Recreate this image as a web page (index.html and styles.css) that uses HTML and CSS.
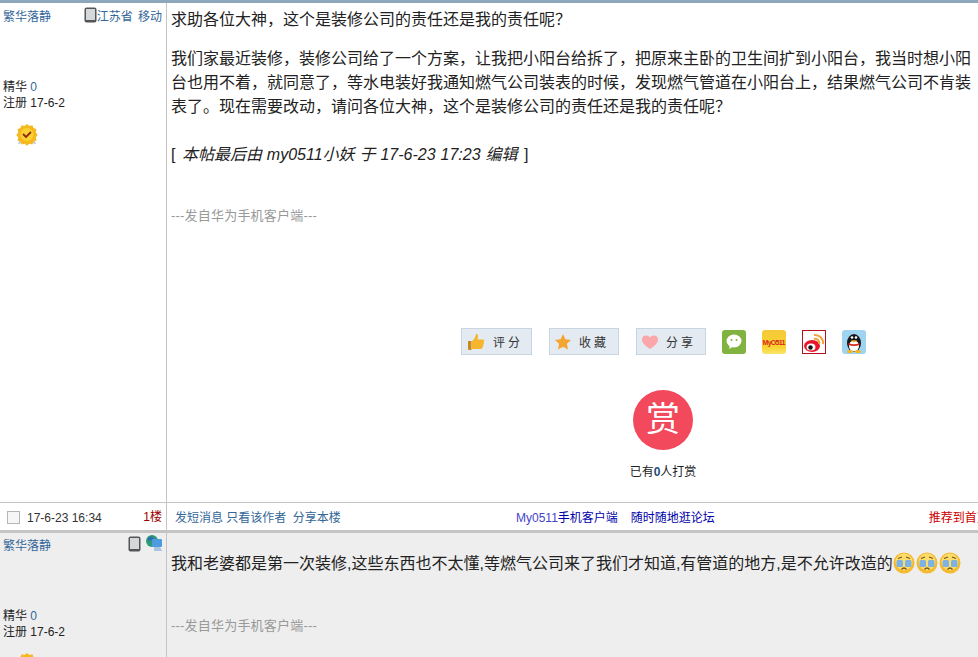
FILE: index.html
```html
<!DOCTYPE html>
<html lang="zh-CN">
<head>
    <meta charset="UTF-8">
    <title>求助各位大神，这个是装修公司的责任还是我的责任呢？</title>
    <link rel="stylesheet" href="styles.css">
</head>
<body>
    <div class="topstrip"></div>

    <!-- 1楼 -->
    <div class="post first">
        <div class="side">
            <div class="side-head">
                <a class="author">繁华落静</a>
                <span class="from">
                    <svg class="tablet" width="13" height="16" viewBox="0 0 13 16"><rect x="0.5" y="0.5" width="12" height="15" rx="2" fill="#555"/><rect x="2" y="2" width="9" height="11" fill="#d4d8da"/></svg>
                    <span class="place">江苏省 移动</span>
                </span>
            </div>
            <div class="stats">
                <div>精华 <a>0</a></div>
                <div>注册 <span class="num">17-6-2</span></div>
            </div>
            <svg class="medal" width="22" height="22" viewBox="0 0 22 22">
                <path d="M3 17l-1 3 4-1zM19 17l1 3-4-1z" fill="#b9c6d2"/>
                <path d="M11 0l2.400 2 3-.8 1.200 2.900 2.900 1.200-.8 3 2 2.700-2 2.400.8 3-2.900 1.200-1.200 2.900-3-.8-2.400 2-2.400-2-3 .8-1.200-2.900-2.900-1.200.8-3-2-2.400 2-2.700-.8-3 2.900-1.200 1.200-2.900 3 .8z" fill="#f5b81f"/>
                <circle cx="11" cy="10.500" r="6.500" fill="#fbd232"/>
                <path d="M7 10l3 3 5-5" fill="none" stroke="#8c2a12" stroke-width="1.800"/>
            </svg>
        </div>
        <div class="main">
            <h1 class="title">求助各位大神，这个是装修公司的责任还是我的责任呢？</h1>
            <p class="text">我们家最近装修，装修公司给了一个方案，让我把小阳台给拆了，把原来主卧的卫生间扩到小阳台，我当时想小阳台也用不着，就同意了，等水电装好我通知燃气公司装表的时候，发现燃气管道在小阳台上，结果燃气公司不肯装表了。现在需要改动，请问各位大神，这个是装修公司的责任还是我的责任呢？</p>
            <p class="edited">[ <i>本帖最后由 my0511小妖 于 17-6-23 17:23 编辑</i> ]</p>
            <p class="sig">---发自华为手机客户端---</p>

            <div class="actions">
                <a class="btn">
                    <svg width="20" height="20" viewBox="0 0 20 20"><path d="M2 9h3.500v9H3a1 1 0 0 1-1-1z" fill="#c98a1a"/><path d="M6 9c2-1 3.500-4 4-7 2-.5 2.500 2 1.500 5.500H17c1.500 0 1.500 2 .5 2.500.8 1 .5 2.200-.5 2.700.5 1 .2 2-.6 2.400.2 1.200-.5 1.900-1.400 1.900H8.500L6 17z" fill="#f7b52c"/></svg>
                    <span>评分</span>
                </a>
                <a class="btn">
                    <svg width="18" height="18" viewBox="0 0 18 18"><path d="M9 1l2.400 5.200 5.600.7-4.100 3.900 1.100 5.700-5-2.800-5 2.800 1.100-5.700L1 6.900l5.600-.7z" fill="#f3a52f"/></svg>
                    <span>收藏</span>
                </a>
                <a class="btn">
                    <svg width="18" height="16" viewBox="0 0 18 16"><path d="M9 15C4 11.500 1 9 1 5.500 1 3 3 1.500 5 1.500c1.800 0 3.200.9 4 2.300.8-1.400 2.200-2.300 4-2.300 2 0 4 1.500 4 4C17 9 14 11.500 9 15z" fill="#fba6a8"/></svg>
                    <span>分享</span>
                </a>
                <div class="shares">
                    <svg width="24" height="24" viewBox="0 0 24 24"><rect width="24" height="24" rx="3" fill="#80b340"/><ellipse cx="12" cy="11" rx="7.500" ry="6.500" fill="#fff"/><path d="M8 15l-1 4 5-3z" fill="#fff"/><circle cx="9.500" cy="10" r="1" fill="#80b340"/><circle cx="14.500" cy="10" r="1" fill="#80b340"/></svg>
                    <svg width="24" height="24" viewBox="0 0 24 24"><defs><linearGradient id="mygrad" x1="0" y1="0" x2="0" y2="1"><stop offset="0" stop-color="#f6c83a"/><stop offset="0.7" stop-color="#f8d32e"/><stop offset="1" stop-color="#fbe46c"/></linearGradient></defs><rect width="24" height="24" rx="3" fill="url(#mygrad)"/><text x="12" y="15" class="mylogo" text-anchor="middle" textLength="23">MyO511</text></svg>
                    <svg width="24" height="24" viewBox="0 0 24 24"><rect x="0.500" y="0.500" width="23" height="23" fill="#fff" stroke="#b5121b"/><ellipse cx="10" cy="16" rx="8" ry="6" fill="#e6162d"/><ellipse cx="9" cy="17" rx="4.500" ry="3.500" fill="#fff"/><circle cx="8.500" cy="17.500" r="2.200" fill="#111"/><path d="M12 5a8 8 0 0 1 9 9M12 9a4 4 0 0 1 5 5" fill="none" stroke="#f2a33a" stroke-width="2"/></svg>
                    <svg width="24" height="24" viewBox="0 0 24 24"><rect width="24" height="24" rx="3" fill="#9fd3f2"/><ellipse cx="12" cy="13" rx="7" ry="9" fill="#151515"/><ellipse cx="12" cy="16" rx="5" ry="5.500" fill="#fff"/><circle cx="10" cy="7.500" r="1.300" fill="#fff"/><circle cx="14" cy="7.500" r="1.300" fill="#fff"/><path d="M8.500 10.500h7l-3.500 2z" fill="#f5b51f"/><path d="M6.500 13q5.500 2.500 11 0v2q-5.500 2-11 0z" fill="#d8281e"/><ellipse cx="8" cy="21.500" rx="3" ry="1.500" fill="#f5b51f"/><ellipse cx="16" cy="21.500" rx="3" ry="1.500" fill="#f5b51f"/></svg>
                </div>
            </div>

            <div class="reward">
                <div class="reward-btn">赏</div>
                <div class="reward-text">已有<b>0</b>人打赏</div>
            </div>
        </div>
    </div>

    <div class="postfoot">
        <div class="foot-side">
            <span class="check"></span>
            <span class="time">17-6-23 16:34</span>
            <span class="floor">1楼</span>
        </div>
        <div class="foot-main">
            <span class="links"><a>发短消息</a> <a>只看该作者</a> <a class="gap">分享本楼</a></span>
            <span class="promo"><span class="light">My0511</span>手机客户端<a class="promo-b">随时随地逛论坛</a></span>
            <a class="recommend">推荐到首页</a>
        </div>
    </div>

    <!-- 2楼 -->
    <div class="post second">
        <div class="side">
            <div class="side-head">
                <a class="author">繁华落静</a>
                <span class="from">
                    <svg class="tablet" width="13" height="16" viewBox="0 0 13 16"><rect x="0.500" y="0.500" width="12" height="15" rx="2" fill="#555"/><rect x="2" y="2" width="9" height="11" fill="#d4d8da"/></svg>
                    <svg class="globe" width="18" height="18" viewBox="0 0 18 18"><circle cx="7" cy="7" r="6" fill="#2f9a78"/><path d="M3 4c2-2 5-2 6 0-1 2-4 3-6 3z" fill="#2c6fb0"/><rect x="7" y="5" width="10" height="8" rx="1" fill="#4f9be0"/><path d="M9 13h6l2 4H9z" fill="#a8c4de"/></svg>
                </span>
            </div>
            <div class="stats">
                <div>精华 <a>0</a></div>
                <div>注册 <span class="num">17-6-2</span></div>
            </div>
            <svg class="medal" width="22" height="22" viewBox="0 0 22 22">
                <path d="M11 0l2.400 2 3-.8 1.200 2.900 2.900 1.200-.8 3 2 2.700-2 2.400.8 3-2.900 1.200-1.200 2.900-3-.8-2.400 2-2.400-2-3 .8-1.200-2.900-2.900-1.200.8-3-2-2.400 2-2.700-.8-3 2.900-1.200 1.200-2.900 3 .8z" fill="#f5b81f"/>
                <circle cx="11" cy="10.500" r="6.500" fill="#fbd232"/>
            </svg>
        </div>
        <div class="main">
            <p class="reply">我和老婆都是第一次装修,这些东西也不太懂,等燃气公司来了我们才知道,有管道的地方,是不允许改造的<svg class="cry" width="22" height="22" viewBox="0 0 22 22"><use href="#cryface"/></svg><svg class="cry" width="22" height="22" viewBox="0 0 22 22"><use href="#cryface"/></svg><svg class="cry" width="22" height="22" viewBox="0 0 22 22"><use href="#cryface"/></svg></p>
            <p class="sig sig-reply">---发自华为手机客户端---</p>
        </div>
    </div>

    <svg class="defs" width="0" height="0">
        <defs>
            <g id="cryface">
                <circle cx="11" cy="11" r="10.500" fill="#f5b92f"/>
                <circle cx="11" cy="10" r="8.500" fill="#fcdc6a"/>
                <path d="M5 6.500l4-1.500M17 6.500l-4-1.500" stroke="#7a5414" stroke-width="1.200" fill="none"/>
                <rect x="3.500" y="8" width="6.500" height="7" rx="1.500" fill="#7fb2e0"/>
                <rect x="12" y="8" width="6.500" height="7" rx="1.500" fill="#7fb2e0"/>
                <path d="M8.500 17.500q2.500-3 5 0" stroke="#7a5414" stroke-width="1.300" fill="none"/>
            </g>
        </defs>
    </svg>
</body>
</html>
```

FILE: styles.css
```css
html, body {
    margin: 0;
    padding: 0;
    height: 657px;
    overflow: hidden;
}
body {
    font-family: "Liberation Sans", "Noto Sans CJK SC", sans-serif;
    font-size: 12px;
    color: #222;
    background-color: #fff;
}
p, h1 {
    margin: 0;
}
.topstrip {
    height: 3px;
    background-color: #8fa7bb;
}

/* post = side column + main column */
.post {
    display: flex;
}
.first {
    height: 499px;
}
.second {
    height: 124px;
    background-color: #eee;
}
.side {
    box-sizing: border-box;
    width: 167px;
    flex-shrink: 0;
    padding: 0 4px 0 3px;
    border-right: 1px solid #c4c4c4;
}
.side-head {
    display: flex;
    justify-content: space-between;
    align-items: center;
    height: 24px;
}
.author {
    color: #336699;
}
.from {
    display: flex;
    align-items: center;
    color: #336699;
    word-spacing: 2px;
}
.globe {
    margin-left: 3px;
    margin-right: -1px;
    margin-top: -2px;
}
.stats {
    margin-top: 52px;
    line-height: 16px;
}
.second .side-head {
    height: 22px;
}
.second .tablet {
    margin-right: 1px;
}
.second .stats {
    margin-top: 53px;
}
.stats a {
    color: #336699;
}
.medal {
    display: block;
    margin: 13px 0 0 13px;
}

.main {
    flex: 1;
    min-width: 0;
    padding: 0 0 0 4px;
}
.title {
    font-size: 16px;
    font-weight: normal;
    line-height: 24px;
    margin-top: 5px;
}
.text {
    font-size: 16px;
    line-height: 24px;
    margin-top: 15px;
}
.edited {
    font-size: 16px;
    line-height: 24px;
    margin-top: 24px;
}
.edited i {
    margin: 0 2px 0 2px;
    word-spacing: 0.5px;
}
.sig {
    font-size: 13px;
    line-height: 18px;
    color: #999;
    letter-spacing: 0.2px;
    margin-top: 40px;
}

.actions {
    display: flex;
    align-items: center;
    margin: 103px 0 0 290px;
}
.btn {
    box-sizing: border-box;
    display: flex;
    align-items: center;
    width: 70px;
    height: 27px;
    margin-right: 17px;
    padding-left: 4px;
    background-color: #e3eaf1;
    border: 1px solid #c9d6e1;
    color: #333;
}
.btn:first-child {
    width: 71px;
}
.btn span {
    margin-left: 7px;
    letter-spacing: 3px;
}
.shares {
    display: flex;
    gap: 16px;
    margin-left: -1px;
}
.mylogo {
    font-size: 7px;
    font-weight: bold;
    fill: #d8281e;
}

.reward {
    display: flex;
    flex-direction: column;
    align-items: center;
    margin: 35px 0 0 313px;
    width: 358px;
}
.reward-btn {
    width: 60px;
    height: 60px;
    border-radius: 50%;
    background-color: #f2495c;
    color: #fff;
    font-size: 34px;
    line-height: 58px;
    text-align: center;
}
.reward-text {
    margin-top: 14px;
    line-height: 16px;
}
.reward-text b {
    color: #1f4e79;
}

/* footer bar under the first post */
.postfoot {
    display: flex;
    height: 27px;
    border-top: 1px solid #c4c4c4;
    border-bottom: 3px solid #c4c4c4;
    white-space: nowrap;
}
.foot-side {
    box-sizing: border-box;
    display: flex;
    align-items: center;
    width: 167px;
    flex-shrink: 0;
    padding: 0 4px 0 7px;
    border-right: 1px solid #c4c4c4;
}
.check {
    box-sizing: border-box;
    width: 13px;
    height: 13px;
    margin-top: 1px;
    border: 1px solid #b5b5b5;
    background-color: #f6f6f6;
}
.time {
    margin-left: 7px;
    margin-top: 2px;
    color: #333;
}
.floor {
    margin-left: auto;
    margin-top: -3px;
    color: #990000;
}
.foot-main {
    display: flex;
    align-items: center;
    flex: 1;
    min-width: 0;
    padding-left: 8px;
    overflow: hidden;
}
.links {
    color: #336699;
    width: 341px;
    flex-shrink: 0;
}
.gap {
    margin-left: 3px;
}
.promo {
    color: #0000aa;
    flex-shrink: 0;
}
.light {
    color: #4444cc;
}
.promo-b {
    margin-left: 13px;
}
.recommend {
    margin-left: 214px;
    color: #cc0000;
    flex-shrink: 0;
}

/* reply */
.reply {
    font-size: 16px;
    line-height: 24px;
    margin-top: 19px;
    white-space: nowrap;
}
.cry {
    vertical-align: -5px;
    margin-right: 1px;
}
.sig-reply {
    margin-top: 41px;
}
.defs {
    position: absolute;
}
```
